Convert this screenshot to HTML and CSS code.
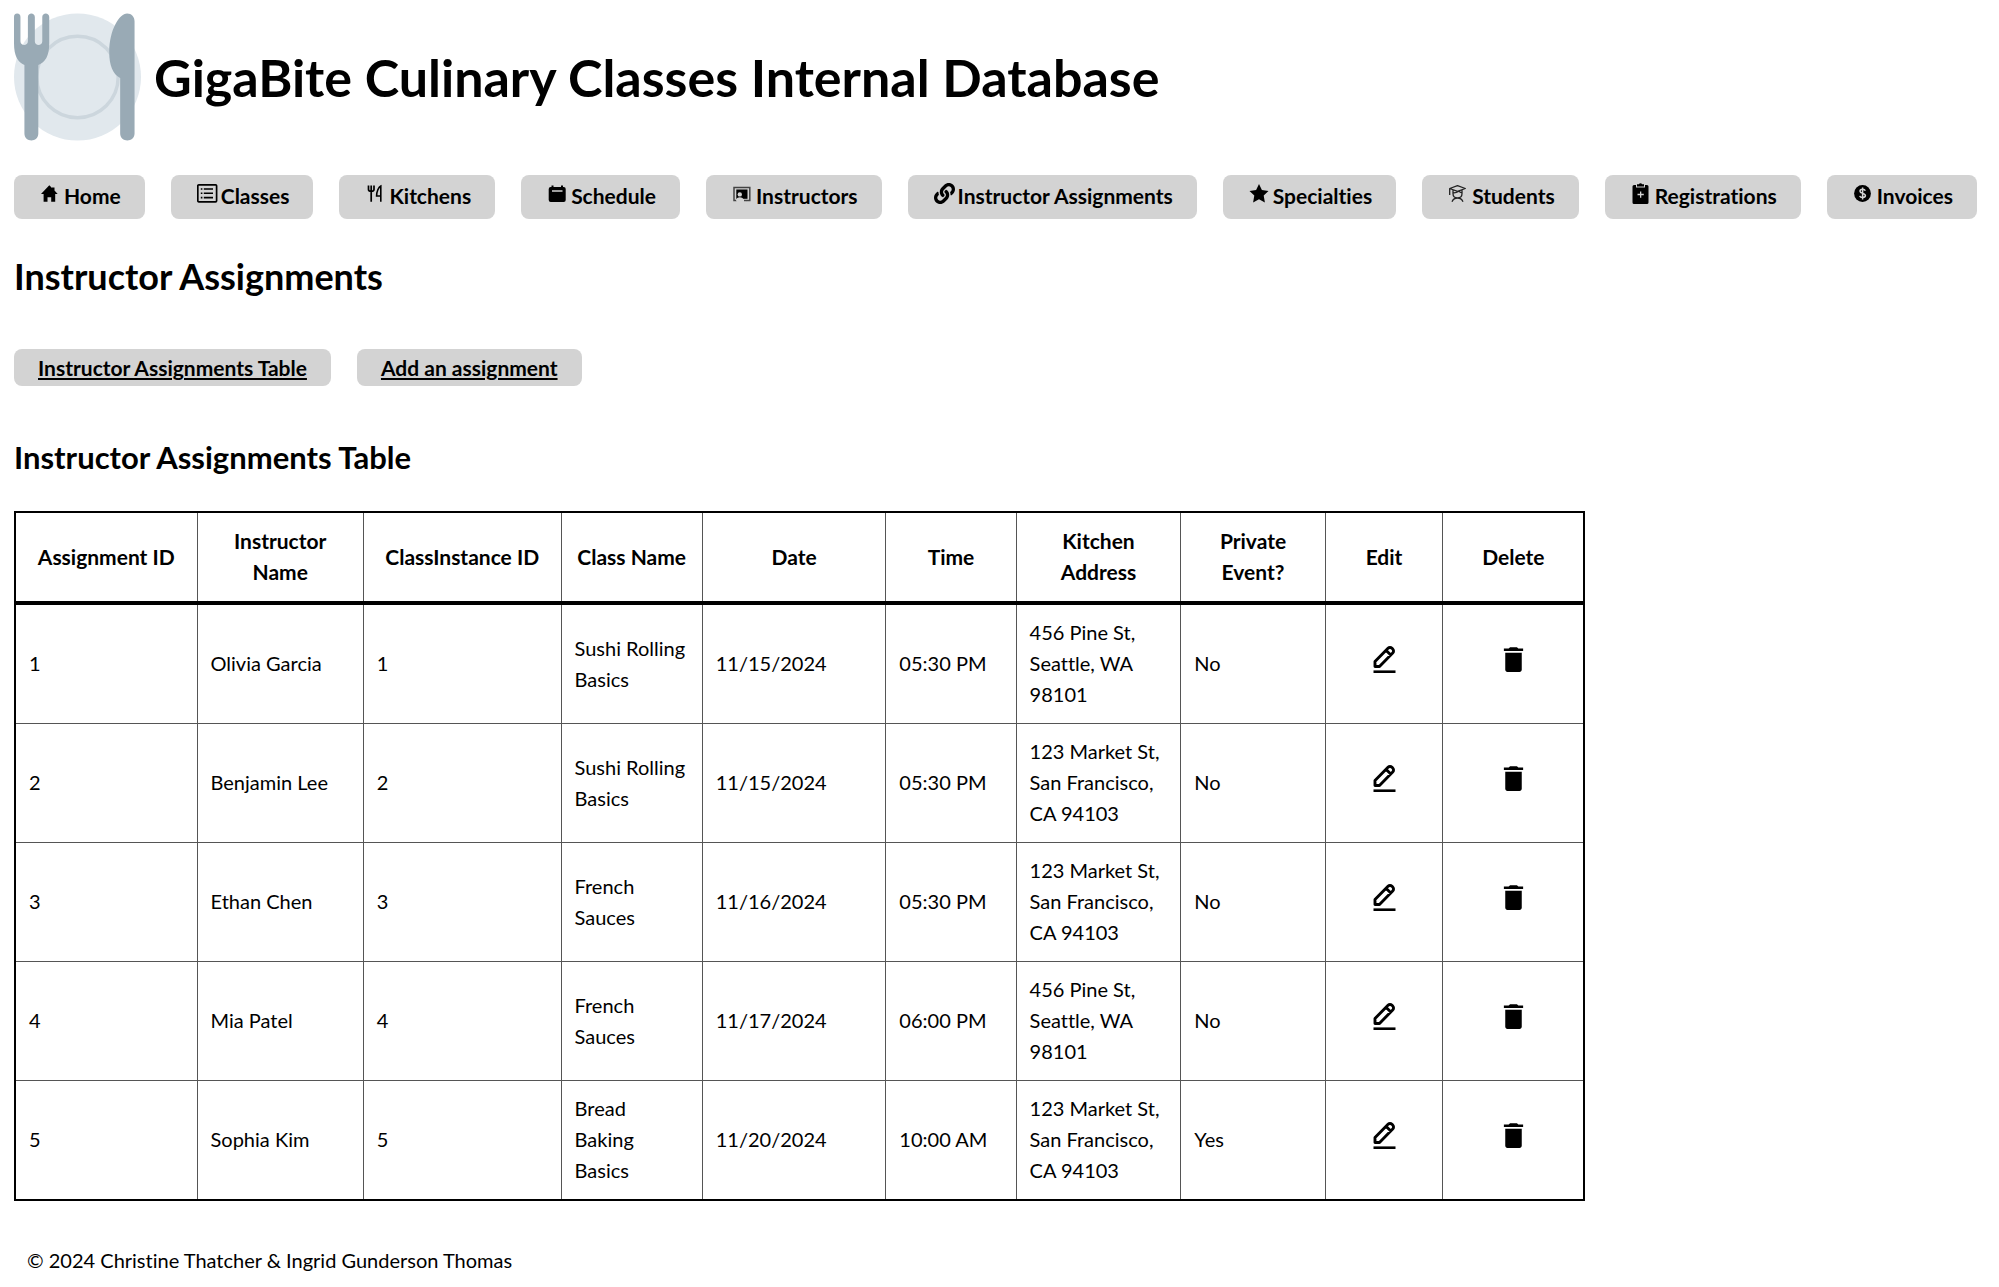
FILE: index.html
```html
<!DOCTYPE html>
<html lang="en">
<head>
<meta charset="utf-8">
<title>GigaBite Culinary Classes Internal Database</title>
<link rel="stylesheet" href="styles.css">
</head>
<body>
<svg class="sprite" aria-hidden="true">
  <symbol id="edit" viewBox="0 0 33 33">
    <path d="M7 23.500v-5L20 5.300a2.800 2.800 0 0 1 4 0l.7.7a2.800 2.800 0 0 1 0 4L11.500 23.500zM18 7.300l5 5" fill="none" stroke="#000" stroke-width="2.900" stroke-linejoin="round"/>
    <path d="M5.500 28.700h22" stroke="#000" stroke-width="2.600"/>
  </symbol>
  <symbol id="delete" viewBox="0 0 24 24">
    <path d="M6 19.400c0 .9.7 1.600 1.600 1.600h8.800c.9 0 1.600-.7 1.600-1.600V7H6zM19 4h-3.500l-1-1h-5l-1 1H5v1.900h14z"/>
  </symbol>
</svg>
<header class="banner">
  <svg class="logo" viewBox="0 0 128 128" aria-hidden="true">
    <circle cx="64" cy="64" r="64" fill="#e1e8ed"/>
    <circle cx="64" cy="64" r="41" fill="none" stroke="#ccd6dd" stroke-width="3.500"/>
    <path fill="#99aab5" d="M3.200 0C5.500 0 6.500 1.500 6.500 3.500V28c0 5 7.500 5 7.500 0V3.500c0-4.700 7-4.700 7 0V28c0 5 7.500 5 7.500 0V3.500c0-4.700 7-4.700 7 0V30c0 13-4 19-11 22v69c0 9.300-14 9.300-14 0V52C4 49 0 43 0 30V3.500C0 1.500 1 0 3.200 0z"/>
    <path fill="#99aab5" d="M114 0c4.500 0 7.500 3.500 7.500 8v113c0 9.300-14.500 9.300-14.500 0V65c-7.500-4-11-13-11-26C96 17 106 0 114 0z"/>
  </svg>
  <h1>GigaBite Culinary Classes Internal Database</h1>
</header>
<nav class="nav">
  <a href="#"><svg viewBox="0 0 21 21"><path d="M9.300 2.300l2.700 2.700v-.5h2.500v3l3.200 3.500H15.200v7.700h-4v-4.500H7.500v4.500H3.600V11H1z"/></svg>Home</a>
  <a href="#"><svg viewBox="0 0 21 21"><rect x=".8" y="1.800" width="18.800" height="17" rx="1" fill="none" stroke="#000" stroke-width="1.700"/><path d="M6.800 6h9.200M6.800 10.300H16M6.800 14.600H16M3.800 6h1.600M3.800 10.300h1.600M3.800 14.600h1.600" stroke="#000" stroke-width="1.600"/></svg>Classes</a>
  <a href="#"><svg viewBox="0 0 21 21"><path d="M3.500 2.500v4q0 1.800 2.700 1.800T9 6.500v-4M6.200 2.500v16.300" fill="none" stroke="#000" stroke-width="1.700"/><path d="M15.800 18.800V3C13.500 4 11.600 8.500 11.600 13h4.200" fill="none" stroke="#000" stroke-width="1.600"/></svg>Kitchens</a>
  <a href="#"><svg viewBox="0 0 21 21"><path fill-rule="evenodd" d="M4 4h.5V2.500h2V4h7.500V2.500h2V4h.7a2 2 0 0 1 2 2v11a2 2 0 0 1-2 2H3.700a2 2 0 0 1-2-2V6a2 2 0 0 1 2-2zM5 7.300v1.500h10.500V7.300z"/></svg>Schedule</a>
  <a href="#"><svg viewBox="0 0 21 21"><path d="M4.500 17.500H2v-13h15.800v13h-3" fill="none" stroke="#444" stroke-width="1.500"/><path d="M4.300 6.500h11.200v9.300H4.300z"/><circle cx="7.800" cy="11.400" r="2.200" fill="#d3d3d3"/><path d="M4.300 18v-1.500c1-3 6-3 7.200 0V18z" fill="#d3d3d3"/><path d="M12 17.500h3" stroke="#444" stroke-width="1.500"/></svg>Instructors</a>
  <a href="#"><svg viewBox="0 0 512 512"><path d="M326.612 185.391c59.747 59.809 58.927 155.698.36 214.590-.11.12-.24.25-.36.37l-67.200 67.200c-59.270 59.270-155.699 59.262-214.960 0-59.270-59.260-59.270-155.700 0-214.960l37.106-37.106c9.840-9.840 26.786-3.300 27.294 10.606.648 17.722 3.826 35.527 9.690 52.721 1.986 5.822.567 12.262-3.783 16.612l-13.087 13.087c-28.026 28.026-28.905 73.660-1.155 101.960 28.024 28.579 74.086 28.749 102.325.51l67.200-67.190c28.191-28.191 28.073-73.757 0-101.830-3.701-3.694-7.429-6.564-10.341-8.569a16.037 16.037 0 0 1-6.947-12.606c-.396-10.567 3.348-21.456 11.698-29.806l21.054-21.055c5.521-5.521 14.182-6.199 20.584-1.731a152.482 152.482 0 0 1 20.522 17.197zM467.547 44.449c-59.261-59.262-155.690-59.270-214.960 0l-67.200 67.200c-.12.12-.25.25-.36.37-58.566 58.892-59.387 154.781.36 214.590a152.454 152.454 0 0 0 20.521 17.196c6.402 4.468 15.064 3.789 20.584-1.731l21.054-21.055c8.350-8.350 12.094-19.239 11.698-29.806a16.037 16.037 0 0 0-6.947-12.606c-2.912-2.005-6.640-4.875-10.341-8.569-28.073-28.073-28.191-73.639 0-101.830l67.200-67.190c28.239-28.239 74.300-28.069 102.325.51 27.750 28.300 26.872 73.934-1.155 101.960l-13.087 13.087c-4.350 4.350-5.769 10.790-3.783 16.612 5.864 17.194 9.042 34.999 9.690 52.721.509 13.906 17.454 20.446 27.294 10.606l37.106-37.106c59.271-59.259 59.271-155.699.001-214.959z"/></svg>Instructor Assignments</a>
  <a href="#"><svg viewBox="0 0 21 21"><path d="M10 1l2.900 6.100 6.600.9-4.800 4.600 1.200 6.900L10 16.300l-5.900 3.200 1.200-6.900L.5 8l6.600-.9z"/></svg>Specialties</a>
  <a href="#"><svg viewBox="0 0 21 21"><path d="M1.700 12V5.500L9.500 2.700l7.800 2.800-7.800 2.800-7.800-2.800M5 7v3.500c0 6 9 6 9 0V7M5 10c3.500 0 5-1 6-1.700 1 1 2 1.400 3 1.700M4 18.700c1-2.200 3-3.700 5.500-3.700s4.500 1.500 5.500 3.700" fill="none" stroke="#222" stroke-width="1.300" stroke-linejoin="round"/></svg>Students</a>
  <a href="#"><svg viewBox="0 0 21 21"><path fill-rule="evenodd" d="M3 2h2v2.500h9V2h2a1.500 1.500 0 0 1 1.500 1.500v16A1.500 1.500 0 0 1 16 21H3a1.500 1.500 0 0 1-1.500-1.500v-16A1.500 1.500 0 0 1 3 2zM9 8.500v2.300H6.500v1.400H9v2.500h1.300v-2.500h2.500v-1.400h-2.500V8.500z"/><path d="M6 3.500V1.300h1.800C8.500 0 10.500 0 11.200 1.300H13v2.200z"/></svg>Registrations</a>
  <a href="#"><svg viewBox="0 0 21 21"><circle cx="9.500" cy="10.500" r="8.400"/><path d="M12.300 7.800C11.500 5.700 7 5.800 7 8.300c0 2.700 5.400 1.500 5.400 4.300 0 2.500-5 2.600-5.700.3M9.600 4.500v12" fill="none" stroke="#d3d3d3" stroke-width="1.500"/></svg>Invoices</a>
</nav>
<main>
  <h2>Instructor Assignments</h2>
  <div class="actions">
    <a href="#table">Instructor Assignments Table</a>
    <a href="#add">Add an assignment</a>
  </div>
  <h3 id="table">Instructor Assignments Table</h3>
  <table>
    <colgroup><col class="c-id"><col class="c-name"><col class="c-instance"><col class="c-class"><col class="c-date"><col class="c-time"><col class="c-address"><col class="c-private"><col class="c-edit"><col class="c-delete"></colgroup>
    <thead>
      <tr><th>Assignment ID</th><th>Instructor Name</th><th>ClassInstance ID</th><th>Class Name</th><th>Date</th><th>Time</th><th>Kitchen Address</th><th>Private Event?</th><th>Edit</th><th>Delete</th></tr>
    </thead>
    <tbody>
      <tr><td>1</td><td>Olivia Garcia</td><td>1</td><td>Sushi Rolling Basics</td><td>11/15/2024</td><td>05:30 PM</td><td>456 Pine St, Seattle, WA 98101</td><td>No</td><td class="act"><button aria-label="Edit"><svg><use href="#edit"/></svg></button></td><td class="act"><button aria-label="Delete"><svg><use href="#delete"/></svg></button></td></tr>
      <tr><td>2</td><td>Benjamin Lee</td><td>2</td><td>Sushi Rolling Basics</td><td>11/15/2024</td><td>05:30 PM</td><td>123 Market St, San Francisco, CA 94103</td><td>No</td><td class="act"><button aria-label="Edit"><svg><use href="#edit"/></svg></button></td><td class="act"><button aria-label="Delete"><svg><use href="#delete"/></svg></button></td></tr>
      <tr><td>3</td><td>Ethan Chen</td><td>3</td><td>French Sauces</td><td>11/16/2024</td><td>05:30 PM</td><td>123 Market St, San Francisco, CA 94103</td><td>No</td><td class="act"><button aria-label="Edit"><svg><use href="#edit"/></svg></button></td><td class="act"><button aria-label="Delete"><svg><use href="#delete"/></svg></button></td></tr>
      <tr><td>4</td><td>Mia Patel</td><td>4</td><td>French Sauces</td><td>11/17/2024</td><td>06:00 PM</td><td>456 Pine St, Seattle, WA 98101</td><td>No</td><td class="act"><button aria-label="Edit"><svg><use href="#edit"/></svg></button></td><td class="act"><button aria-label="Delete"><svg><use href="#delete"/></svg></button></td></tr>
      <tr><td>5</td><td>Sophia Kim</td><td>5</td><td>Bread Baking Basics</td><td>11/20/2024</td><td>10:00 AM</td><td>123 Market St, San Francisco, CA 94103</td><td>Yes</td><td class="act"><button aria-label="Edit"><svg><use href="#edit"/></svg></button></td><td class="act"><button aria-label="Delete"><svg><use href="#delete"/></svg></button></td></tr>
    </tbody>
  </table>
</main>
<footer>© 2024 Christine Thatcher &amp; Ingrid Gunderson Thomas</footer>
</body>
</html>
```
FILE: styles.css
```css
* { box-sizing: border-box; }
body {
  margin: 0;
  padding: 13px 21px 13px 14px;
  background: #fff;
  color: #000;
  font: 20px/31px Lato, "Liberation Sans", sans-serif;
  font-variant-ligatures: none;
}
.sprite { display: none; }
.banner { display: flex; align-items: center; gap: 13px; }
.logo { width: 127px; height: 128px; flex: none; }
h1, h2, h3 { margin: 0; font-weight: 700; }
h1 { font-size: 52px; line-height: 80px; }
h2 { font-size: 36px; line-height: 54px; }
h3 { font-size: 31px; line-height: 46px; }
.nav, .actions { display: flex; gap: 26px; }
.nav { margin: 34px 0 30px; }
.nav a, .actions a {
  border-radius: 8px;
  background: #d3d3d3;
  color: #000;
  font-size: 21px;
  font-weight: 700;
  white-space: nowrap;
}
.nav a { padding: 5px 24px 8px 26px; text-decoration: none; }
.nav svg { width: 21px; height: 21px; margin-right: 3px; vertical-align: baseline; }
.actions { margin: 46px 0 48px; }
.actions a { padding: 3px 24px; }
table {
  width: 80%;
  margin-top: 31px;
  table-layout: fixed;
  border-collapse: collapse;
  border: 2px solid #000;
}
th, td { border: 1px solid #555; }
th { padding: 12px 12px 14px; font-size: 21px; }
thead { border-bottom: 4px solid #000; }
td { padding: 12px 12px 13px 13px; text-align: left; }
.c-id { width: 11.6%; }
.c-name { width: 10.6%; }
.c-instance { width: 12.6%; }
.c-class { width: 9%; }
.c-date { width: 11.7%; }
.c-time { width: 8.3%; }
.c-address { width: 10.5%; }
.c-private { width: 9.2%; }
.c-edit { width: 7.5%; }
.c-delete { width: 9%; }
td.act { text-align: center; }
.act button { padding: 0; border: 0; background: none; font: inherit; }
.act svg { display: block; width: 33px; height: 33px; margin-bottom: 1px; }
footer { margin-top: 44px; padding-left: 13px; }
```
